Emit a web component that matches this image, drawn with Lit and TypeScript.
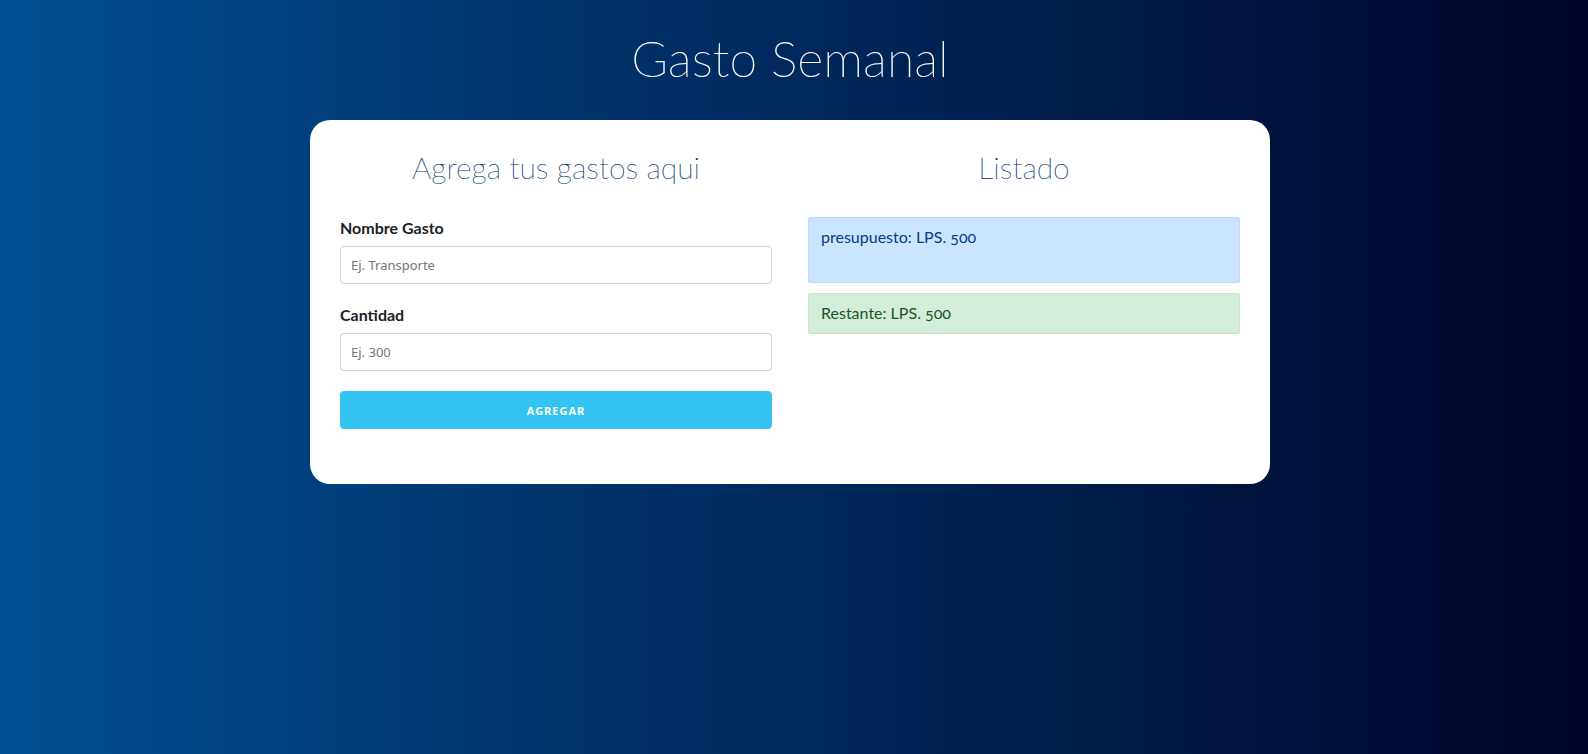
import { LitElement, html, css } from "lit";
import { customElement, state } from "lit/decorators.js";

@customElement("app-root")
export class AppRoot extends LitElement {
  static styles = css`
    :host {
      display: block;
      box-sizing: border-box;
      min-height: 100vh;
      padding: 24px 24px 48px 16px;
      background: linear-gradient(to right, #004e92, #000428);
      font-family: Lato, "Open Sans", sans-serif;
      font-size: 16px;
      line-height: 24px;
      color: #222;
    }
    *,
    *::before,
    *::after {
      box-sizing: border-box;
    }
    .title {
      margin: 0 0 28px;
      font-family: "Lato Thin", Lato, sans-serif;
      font-size: 50px;
      line-height: 68px;
      font-weight: 300;
      text-align: center;
      color: #fff;
    }
    .card {
      display: grid;
      grid-template-columns: 1fr 1fr;
      column-gap: 36px;
      width: 100%;
      max-width: 960px;
      margin: 0 auto;
      padding: 24px 30px 55px;
      border-radius: 20px;
      background: #fff;
    }
    .subtitle {
      margin: 0 0 26px;
      font-family: "Lato Thin", Lato, sans-serif;
      font-size: 30px;
      line-height: 47px;
      font-weight: 300;
      text-align: center;
      color: #003172;
    }
    .form {
      display: flex;
      flex-direction: column;
      gap: 20px;
    }
    .field {
      display: flex;
      flex-direction: column;
      gap: 7px;
    }
    .label {
      font-weight: 700;
      line-height: 22px;
    }
    .input,
    .button {
      width: 100%;
      height: 38px;
      margin: 0;
      border-radius: 4px;
      font-family: "Noto Sans", sans-serif;
    }
    .input {
      padding: 6px 10px;
      border: 1px solid #d1d1d1;
      background: #fff;
      font-size: 13px;
      color: #222;
    }
    .input::placeholder {
      color: #757575;
    }
    .button {
      padding: 0 30px;
      border: 1px solid #33c3f0;
      background: #33c3f0;
      color: #fff;
      font-size: 11px;
      font-weight: 700;
      letter-spacing: 1px;
      text-transform: uppercase;
      cursor: pointer;
    }
    .summary {
      display: flex;
      flex-direction: column;
      gap: 10px;
    }
    .alert {
      margin: 0;
      padding: 7px 12px 9px;
      border: 1px solid;
      border-radius: 2px;
      line-height: 23px;
      font-variant-numeric: oldstyle-nums;
    }
    .primary {
      padding-bottom: 34px;
      color: #004085;
      background: #cce5ff;
      border-color: #b8daff;
    }
    .success {
      color: #155724;
      background: #d4edda;
      border-color: #c3e6cb;
    }
    @media (max-width: 640px) {
      .card {
        grid-template-columns: 1fr;
        row-gap: 24px;
      }
    }
  `;

  @state() private budget = 500;
  @state() private remaining = 500;

  private add(event: Event) {
    event.preventDefault();
    const form = event.target as HTMLFormElement;
    const amount = Number(new FormData(form).get("cantidad"));
    if (amount > 0) {
      this.remaining -= amount;
      form.reset();
    }
  }

  render() {
    return html`
      <h1 class="title">Gasto Semanal</h1>
      <main class="card">
        <section>
          <h2 class="subtitle">Agrega tus gastos aqui</h2>
          <form class="form" @submit=${this.add}>
            <div class="field">
              <label class="label" for="gasto">Nombre Gasto</label>
              <input class="input" id="gasto" name="gasto" type="text" placeholder="Ej. Transporte" />
            </div>
            <div class="field">
              <label class="label" for="cantidad">Cantidad</label>
              <input class="input" id="cantidad" name="cantidad" type="text" placeholder="Ej. 300" />
            </div>
            <button class="button" type="submit">Agregar</button>
          </form>
        </section>
        <section>
          <h2 class="subtitle">Listado</h2>
          <div class="summary">
            <p class="alert primary">presupuesto: LPS. ${this.budget}</p>
            <p class="alert success">Restante: LPS. ${this.remaining}</p>
          </div>
        </section>
      </main>
    `;
  }
}
